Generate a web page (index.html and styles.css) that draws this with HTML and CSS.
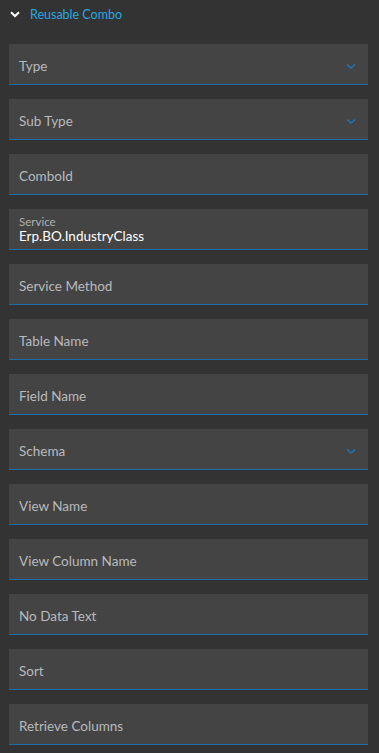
FILE: index.html
```html
<!DOCTYPE html>
<html>
<head>
<meta charset="utf-8">
<link rel="stylesheet" href="styles.css">
</head>
<body>
<div class="panel">
  <div class="header">
    <svg class="hchev" width="10" height="7" viewBox="0 0 10 7"><path d="M1 1.2 L5 5 L9 1.2" fill="none" stroke="#ffffff" stroke-width="2"/></svg>
    <span class="title">Reusable Combo</span>
  </div>
  <div class="fields">
    <div class="field select"><span class="label">Type</span><svg class="chev" width="10" height="7" viewBox="0 0 10 7"><path d="M1 1.5 L5 5 L9 1.5" fill="none" stroke="#1f74b8" stroke-width="1.6"/></svg></div>
    <div class="field select"><span class="label">Sub Type</span><svg class="chev" width="10" height="7" viewBox="0 0 10 7"><path d="M1 1.5 L5 5 L9 1.5" fill="none" stroke="#1f74b8" stroke-width="1.6"/></svg></div>
    <div class="field"><span class="label">ComboId</span></div>
    <div class="field filled"><span class="small">Service</span><span class="value">Erp.BO.IndustryClass</span></div>
    <div class="field"><span class="label">Service Method</span></div>
    <div class="field"><span class="label">Table Name</span></div>
    <div class="field"><span class="label">Field Name</span></div>
    <div class="field select"><span class="label">Schema</span><svg class="chev" width="10" height="7" viewBox="0 0 10 7"><path d="M1 1.5 L5 5 L9 1.5" fill="none" stroke="#1f74b8" stroke-width="1.6"/></svg></div>
    <div class="field"><span class="label">View Name</span></div>
    <div class="field"><span class="label">View Column Name</span></div>
    <div class="field"><span class="label">No Data Text</span></div>
    <div class="field"><span class="label">Sort</span></div>
    <div class="field"><span class="label">Retrieve Columns</span></div>
  </div>
</div>
</body>
</html>
```
FILE: styles.css
```css
html, body {
  margin: 0;
  padding: 0;
  background: #333333;
}
body {
  font-family: "Lato", "Liberation Sans", sans-serif;
  width: 379px;
  height: 753px;
  overflow: hidden;
}
.panel {
  padding: 0 11px 0 9px;
}
.header {
  height: 30px;
  display: flex;
  align-items: center;
  gap: 10px;
  padding-left: 1px;
}
.hchev {
  display: block;
  margin-top: -1px;
}
.title {
  color: #29a8e0;
  font-size: 12.5px;
  margin-top: -2px;
}
.fields {
  margin-top: 14px;
  display: flex;
  flex-direction: column;
  gap: 14px;
}
.field {
  height: 40px;
  background: #444444;
  border-bottom: 1px solid #1b6ea8;
  display: flex;
  align-items: center;
  padding: 0 12px 0 10px;
}
.label {
  color: #b8babd;
  font-size: 13.5px;
  flex: 1;
  margin-top: 4px;
}
.chev {
  display: block;
  margin-top: 4px;
}
.filled {
  flex-direction: column;
  align-items: flex-start;
  justify-content: center;
}
.small {
  color: #b0b0b0;
  font-size: 11.5px;
  line-height: 13px;
  margin-top: 2px;
}
.value {
  color: #ffffff;
  font-size: 13.5px;
  line-height: 17px;
}
```
